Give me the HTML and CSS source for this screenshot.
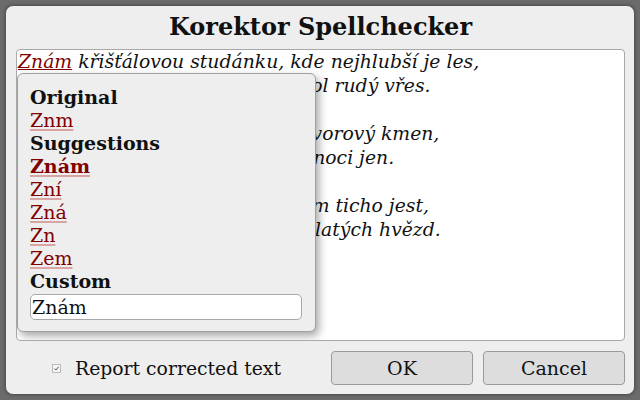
FILE: index.html
```html
<!DOCTYPE html>
<html lang="cs">
<head>
    <meta charset="UTF-8">
    <title>Korektor Spellchecker</title>
    <link rel="stylesheet" href="styles.css">
</head>
<body>
    <div class="okno">
        <h1 class="nadpis">Korektor Spellchecker</h1>
        <div class="textovePole">
            <p><a class="chyba" href="#">Znám</a> křišťálovou studánku, kde nejhlubší je les,<br>
            tam mezi buky zelenými, a vůkol rudý vřes.</p>
            <p>Nad ní se v lese sklání starý, javorový kmen,<br>
            a v její hloubi svítí tiché světlo noci jen.</p>
            <p>Tak, tajemně tam, tak svatě, tam ticho jest,<br>
            a v tůni se třpytí tisícero těch zlatých hvězd.</p>

            <div class="nabidka">
                <div class="nadpisek">Original</div>
                <a class="moznost" href="#">Znm</a>
                <div class="nadpisek">Suggestions</div>
                <a class="moznost vybrana" href="#">Znám</a>
                <a class="moznost" href="#">Zní</a>
                <a class="moznost" href="#">Zná</a>
                <a class="moznost" href="#">Zn</a>
                <a class="moznost" href="#">Zem</a>
                <div class="nadpisek">Custom</div>
                <input class="vlastni" type="text" value="Znám">
            </div>
        </div>
        <div class="spodek">
            <label class="hlaseni">
                <span class="zaskrtavatko">
                    <svg width="5" height="5" viewBox="0 0 5 5"><path d="M0.5 2.6 L2 4 L4.6 0.8" fill="none" stroke="#555" stroke-width="1"/></svg>
                </span>
                Report corrected text
            </label>
            <button class="tlacitko">OK</button>
            <button class="tlacitko">Cancel</button>
        </div>
    </div>
</body>
</html>
```

FILE: styles.css
```css
html, body {
    margin: 0;
    height: 100%;
}
body {
    background: #6b6b6b;
    padding: 6px;
    box-sizing: border-box;
    font-family: "DejaVu Serif", serif;
    color: #111;
}
.okno {
    background: #eeeeee;
    border-radius: 7px;
    height: 100%;
    box-sizing: border-box;
    padding: 0 9px 9px 10px;
    display: flex;
    flex-direction: column;
    box-shadow: 0 0 4px rgba(0, 0, 0, 0.5);
}
.nadpis {
    margin: 0;
    height: 43px;
    line-height: 42px;
    text-align: center;
    font-size: 24px;
    font-weight: bold;
}
.textovePole {
    flex: 1;
    position: relative;
    background: white;
    border: 1px solid #a8a8a8;
    border-radius: 4px;
    padding: 0 0 0 1px;
    font-size: 18.8px;
    font-style: italic;
    line-height: 24px;
    overflow: hidden;
}
.textovePole p {
    margin: 0 0 24px 0;
    white-space: nowrap;
}
.chyba {
    color: #800000;
    text-decoration: underline;
}
.nabidka {
    position: absolute;
    left: 0;
    top: 23px;
    width: 273px;
    padding: 12px 12px 11px 12px;
    background: #eeeeee;
    border: 1px solid #a0a0a0;
    border-radius: 6px;
    box-shadow: 3px 4px 8px rgba(0, 0, 0, 0.35);
    font-size: 19px;
    font-style: normal;
    line-height: 23px;
    display: flex;
    flex-direction: column;
    align-items: flex-start;
}
.nadpisek {
    font-weight: bold;
}
.moznost {
    color: #800000;
    text-decoration: underline;
    text-decoration-color: #d8a4a4;
    text-decoration-thickness: 2px;
    text-underline-offset: 2px;
}
.vybrana {
    font-weight: bold;
}
.vlastni {
    margin-top: 1px;
    width: 272px;
    height: 26px;
    box-sizing: border-box;
    border: 1px solid #a8a8a8;
    border-radius: 5px;
    padding: 0 1px;
    font-family: "DejaVu Serif", serif;
    font-size: 19px;
    color: #111;
    background: white;
}
.spodek {
    display: grid;
    grid-template-columns: 1fr 142px 142px;
    column-gap: 10px;
    margin-top: 10px;
    height: 34px;
}
.hlaseni {
    display: flex;
    align-items: center;
    justify-content: center;
    font-size: 18.8px;
    gap: 14px;
    padding-right: 4px;
}
.zaskrtavatko {
    width: 7px;
    height: 7px;
    border: 1px solid #bbb;
    background: #f6f6f6;
    display: flex;
    align-items: center;
    justify-content: center;
}
.tlacitko {
    font-family: "DejaVu Serif", serif;
    font-size: 19px;
    color: #111;
    background: #dddddd;
    border: 1px solid #9a9a9a;
    border-radius: 4px;
}
```
